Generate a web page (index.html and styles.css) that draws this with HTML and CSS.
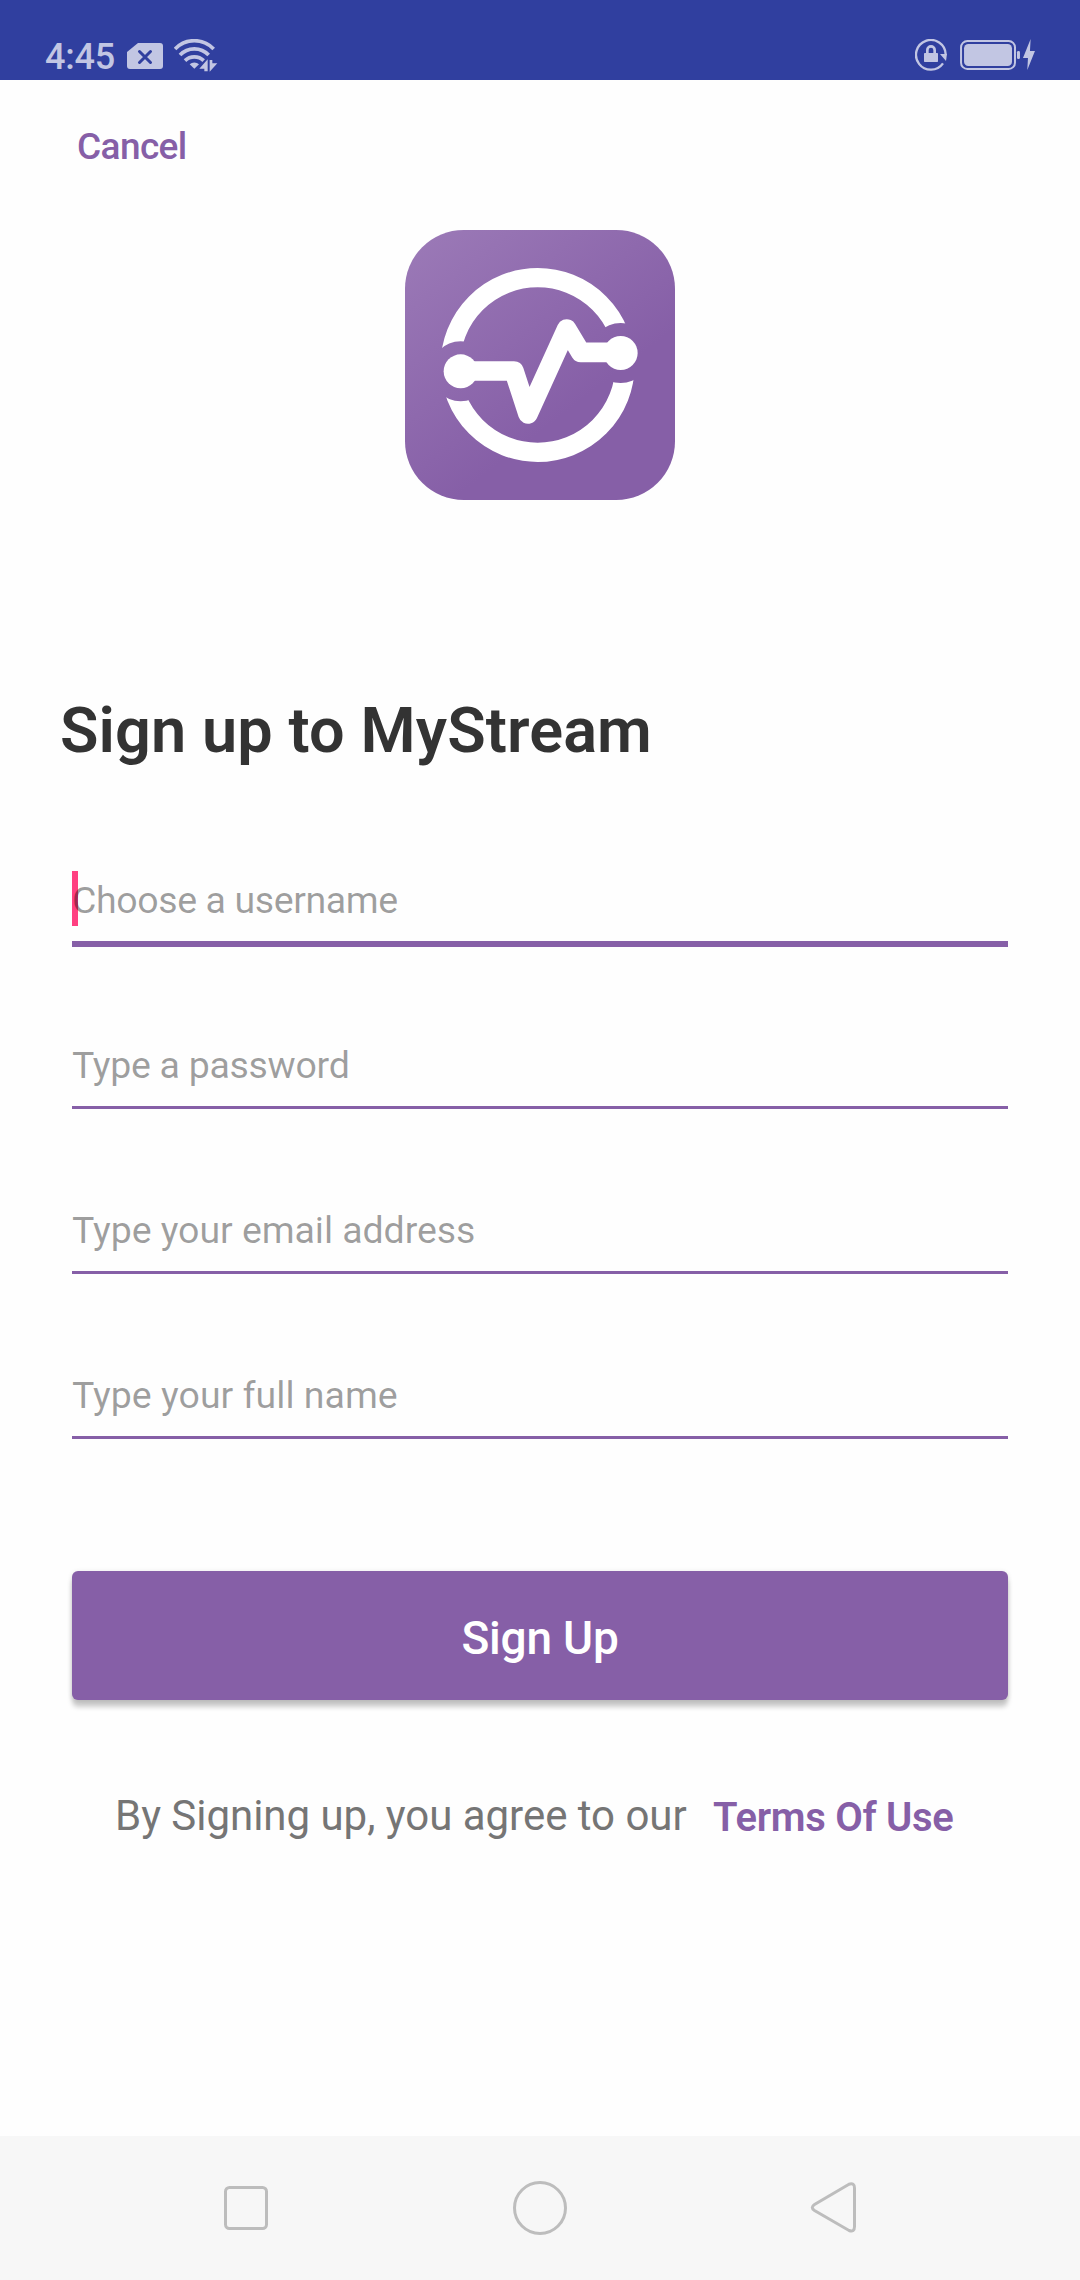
FILE: index.html
```html
<!DOCTYPE html>
<html lang="en">
<head>
<meta charset="utf-8">
<title>Sign up to MyStream</title>
<link rel="stylesheet" href="styles.css">
</head>
<body>
<div class="screen">
  <header class="status">
    <div class="status-left">
      <span class="clock">4:45</span>
      <svg class="sim" viewBox="0 0 36 26"><path fill="currentColor" d="M11 0H33a3 3 0 0 1 3 3V23a3 3 0 0 1-3 3H3a3 3 0 0 1-3-3V9Z"/><path class="knock" d="M12.500 8.500l11 11M23.500 8.500l-11 11"/></svg>
      <svg class="wifi" viewBox="0 0 132 102">
        <g fill="none" stroke="currentColor" stroke-width="11">
          <path d="M3 30a80 80 0 0 1 116 0"/><path d="M18 48a59 59 0 0 1 86 0"/><path d="M33 65a40 40 0 0 1 56 0"/>
        </g>
        <path fill="currentColor" d="M47 76a20 20 0 0 1 28 0L61 89Z"/>
        <path class="gap" d="M101 61V97H91V89H76Z M107 63h8v10h15l-23 25Z"/>
      </svg>
    </div>
    <div class="status-right">
      <svg class="lock" viewBox="0 0 96 96">
        <path fill="none" stroke="currentColor" stroke-width="7" d="M92 46A44.500 44.500 0 1 0 84 73"/>
        <path fill="currentColor" d="M75 45H96L93 66Z"/>
        <rect fill="currentColor" x="27" y="42" width="42" height="27" rx="2"/>
        <path fill="none" stroke="currentColor" stroke-width="8" d="M37 43V33a11 11 0 0 1 22 0V43"/>
      </svg>
      <svg class="battery" viewBox="0 0 225 94">
        <rect fill="none" stroke="currentColor" stroke-width="6" x="3" y="6" width="162" height="84" rx="19"/>
        <rect fill="currentColor" x="12" y="15" width="144" height="66" rx="13"/>
        <rect fill="currentColor" x="171" y="36" width="9" height="24" rx="4"/>
        <path fill="currentColor" d="M212 0 189 57h15l-2 36 23-57h-15Z"/>
      </svg>
    </div>
  </header>

  <main class="content">
    <a class="cancel">Cancel</a>
    <svg class="logo" viewBox="45 45 810 810">
      <defs>
        <linearGradient id="tile" x1="0" y1="0.1" x2="0.5" y2="0.75"><stop offset="0" stop-color="#9a78b6"/><stop offset="1" stop-color="#865fa7"/></linearGradient>
        <mask id="ringMask"><rect width="900" height="900" fill="#fff"/><circle cx="212" cy="469" r="90"/><circle cx="692" cy="414" r="90"/></mask>
      </defs>
      <rect x="45" y="45" width="810" height="810" rx="176" fill="url(#tile)"/>
      <circle cx="443" cy="450" r="262" fill="none" stroke="#fff" stroke-width="58" mask="url(#ringMask)"/>
      <path d="M212 468H372L414 597 530 342 572 412H692" fill="none" stroke="#fff" stroke-width="59" stroke-linejoin="round"/>
      <circle cx="212" cy="469" r="51" fill="#fff"/><circle cx="692" cy="414" r="51" fill="#fff"/>
    </svg>
    <h1 class="title">Sign up to MyStream</h1>

    <form class="form">
      <div class="field focused"><span class="hint username">Choose a username</span></div>
      <div class="field"><span class="hint password">Type a password</span></div>
      <div class="field"><span class="hint email">Type your email address</span></div>
      <div class="field"><span class="hint fullname">Type your full name</span></div>
      <div class="submit">Sign Up</div>
    </form>

    <div class="legal">
      <span class="agree">By Signing up, you agree to our</span>
      <a class="terms">Terms Of Use</a>
    </div>
  </main>

  <nav class="navbar">
    <svg class="nav-icon" viewBox="0 0 60 60"><rect x="9.500" y="9.500" width="41" height="41" rx="4"/></svg>
    <svg class="nav-icon" viewBox="0 0 60 60"><circle cx="30" cy="30" r="25.500"/></svg>
    <svg class="nav-icon" viewBox="0 0 60 60"><path d="M45 6.200 10.500 26.500Q6 29.500 10.500 32.500L45 52.500Q50.500 54.500 50.500 48.500V10Q50.500 4.500 45 6.200Z"/></svg>
  </nav>
</div>
</body>
</html>
```
FILE: styles.css
```css
* { box-sizing: border-box; }
body { margin: 0; background: #fefefe; font-family: Roboto, "Noto Sans", sans-serif; }
svg { display: block; flex: none; }
.screen { width: 1080px; height: 2280px; display: flex; flex-direction: column; overflow: hidden; }

.status { height: 80px; background: #303f9f; color: #c2c6e3; display: flex; justify-content: space-between; padding: 0 45px; }
.status-left, .status-right { display: flex; align-items: flex-start; }
.clock { font-size: 36px; font-weight: 500; line-height: 42px; letter-spacing: -0.2px; width: 82px; padding-top: 36px; }
.sim { width: 36px; height: 26px; margin-top: 43px; }
.knock { fill: none; stroke: #303f9f; stroke-width: 3; stroke-linecap: round; }
.wifi { width: 44px; height: 34px; margin: 39px 0 0 11px; }
.gap { fill: currentColor; stroke: #303f9f; stroke-width: 5; paint-order: stroke; }
.lock { width: 32px; height: 32px; margin: 39px 13px 0 0; }
.battery { width: 75px; height: 31.300px; margin-top: 39px; }

.content { flex: 1; display: flex; flex-direction: column; }
.cancel { margin: 40px 0 0 77px; font-size: 37px; font-weight: 500; line-height: 54px; letter-spacing: -0.6px; color: #865fa7; }
.logo { width: 270px; height: 270px; margin-top: 56px; align-self: center; }
.title { margin: 186px 0 0 60px; font-size: 63px; font-weight: 600; line-height: 90px; letter-spacing: 0.1px; color: #333; white-space: nowrap; }

.form { padding: 0 72px; }
.field { height: 165px; border-bottom: 3px solid #865fa7; display: flex; align-items: flex-end; position: relative; }
.field.focused { height: 171px; border-bottom-width: 6px; margin-bottom: -3px; }
.field.focused::before { content: ""; position: absolute; left: 0; bottom: 15px; width: 6px; height: 55px; background: #ff4081; }
.hint { font-size: 37.500px; line-height: 82px; color: rgba(0, 0, 0, .38); position: relative; white-space: nowrap; }
.username { letter-spacing: -0.4px; }
.password { letter-spacing: -0.3px; }
.email { letter-spacing: -0.07px; }
.submit { margin-top: 132px; height: 129px; border-radius: 6px; background: #865fa7; color: #fff; font-size: 46px; font-weight: 500; line-height: 135px; letter-spacing: -0.2px; text-align: center; box-shadow: 0 7px 5px rgba(0, 0, 0, .2), 0 1px 5px rgba(0, 0, 0, .12); }

.legal { display: flex; margin: 86px 0 0 115px; line-height: 60px; white-space: nowrap; }
.agree { font-size: 42px; letter-spacing: -0.03px; color: #757575; width: 598px; }
.terms { font-size: 40px; font-weight: 600; letter-spacing: -0.3px; color: #865fa7; padding-top: 2px; }

.navbar { height: 144px; background: #f7f7f7; display: flex; justify-content: space-between; align-items: center; padding: 0 216px; }
.nav-icon { width: 60px; height: 60px; fill: none; stroke: #bdbdbd; stroke-width: 3; }
```
